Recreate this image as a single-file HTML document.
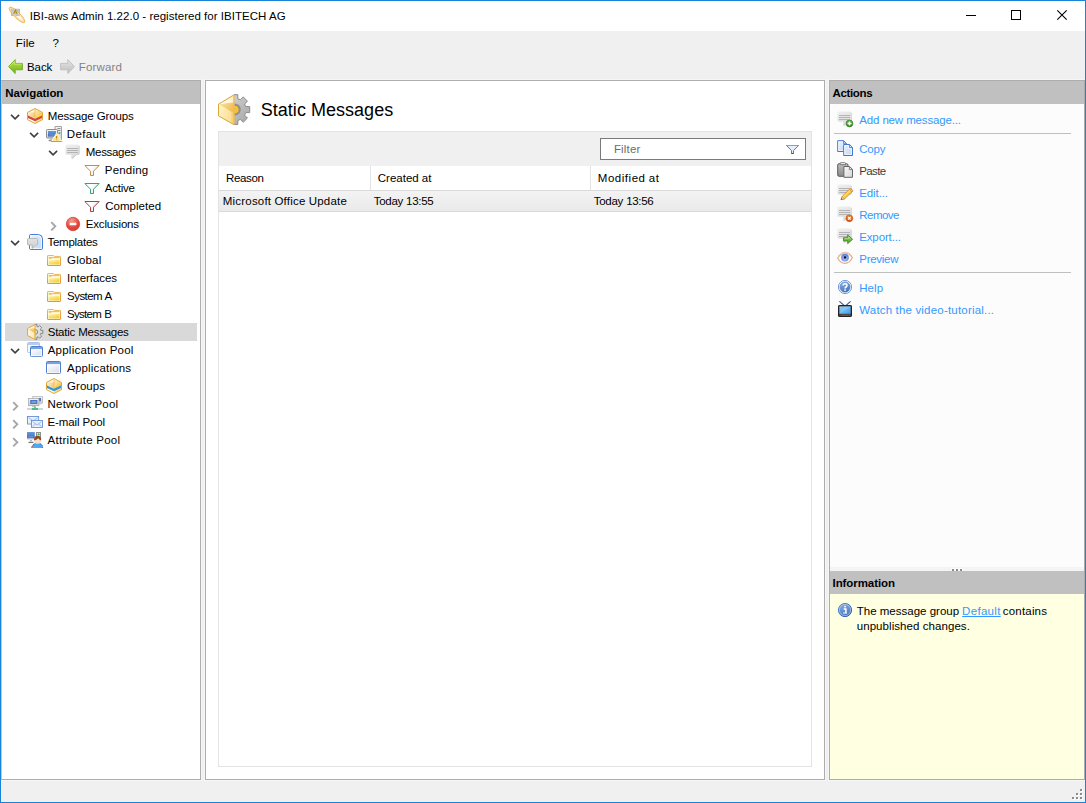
<!DOCTYPE html>
<html>
<head>
<meta charset="utf-8">
<title>IBI-aws Admin 1.22.0 - registered for IBITECH AG</title>
<style>
*{box-sizing:border-box;margin:0;padding:0}
html,body{width:1086px;height:803px;overflow:hidden;background:#f0f0f0}
body{font-family:"Liberation Sans",sans-serif;font-size:12px;color:#000;position:relative}
div,span,svg{position:absolute}
.tx{white-space:nowrap;font-size:12px}
.ic{overflow:visible}
#win{left:0;top:0;width:1086px;height:803px;border:1px solid #1883d7;background:transparent}
#title{left:1px;top:1px;width:1084px;height:30px;background:#fff}
.pn{border:1px solid #adadad;background:#fff;box-shadow:0 0 0 1px #f6f6f6}
.hd{background:#c0c0c0}
</style>
</head>
<body>

<svg style="left:0;top:0;width:0;height:0"><defs>
<linearGradient id="gFold" x1="0" y1="0" x2="0.8" y2="1"><stop offset="0" stop-color="#fff2b4"/><stop offset="1" stop-color="#f5cd2c"/></linearGradient>
<linearGradient id="gFoldS" x1="0" y1="0" x2="0" y2="1"><stop offset="0" stop-color="#ecb858"/><stop offset="1" stop-color="#e6933a"/></linearGradient>
<linearGradient id="gBoxL" x1="0" y1="0" x2="1" y2="1"><stop offset="0" stop-color="#fffbea"/><stop offset="1" stop-color="#eebf58"/></linearGradient>
<linearGradient id="gBoxR" x1="0" y1="0" x2="1" y2="1"><stop offset="0" stop-color="#fff0c4"/><stop offset="1" stop-color="#f6b62e"/></linearGradient>
<linearGradient id="gSide" x1="0" y1="0" x2="1" y2="0.6"><stop offset="0" stop-color="#fff8dc"/><stop offset="1" stop-color="#fbdc8c"/></linearGradient>
<linearGradient id="gInner" x1="0" y1="0" x2="1" y2="0.5"><stop offset="0" stop-color="#fae3a4"/><stop offset="1" stop-color="#f3bd52"/></linearGradient>
<linearGradient id="gTopF" x1="0" y1="1" x2="1" y2="0"><stop offset="0" stop-color="#ffffff"/><stop offset="1" stop-color="#fbe9b4"/></linearGradient>
<linearGradient id="gGreen" x1="0" y1="0" x2="0" y2="1"><stop offset="0" stop-color="#bfe455"/><stop offset="0.5" stop-color="#96cc2c"/><stop offset="1" stop-color="#6cae1c"/></linearGradient>
<linearGradient id="gGray" x1="0" y1="0" x2="0" y2="1"><stop offset="0" stop-color="#e6e6e6"/><stop offset="1" stop-color="#bcbcbc"/></linearGradient>
<linearGradient id="gBub" x1="0" y1="0" x2="0.3" y2="1"><stop offset="0" stop-color="#f0f0f0"/><stop offset="1" stop-color="#d9d9d9"/></linearGradient>
<linearGradient id="gBub2" x1="0" y1="0" x2="0" y2="1"><stop offset="0" stop-color="#e2e2e2"/><stop offset="1" stop-color="#d0d0d0"/></linearGradient>
<linearGradient id="gBlueDoc" x1="0" y1="0" x2="1" y2="1"><stop offset="0" stop-color="#eaf3fe"/><stop offset="1" stop-color="#bcd6f8"/></linearGradient>
<linearGradient id="gWin" x1="0.3" y1="0" x2="1" y2="1"><stop offset="0" stop-color="#ffffff"/><stop offset="1" stop-color="#d3dcec"/></linearGradient>
<linearGradient id="gScr" x1="0" y1="0" x2="0" y2="1"><stop offset="0" stop-color="#6a98dc"/><stop offset="1" stop-color="#3d6cbc"/></linearGradient>
<linearGradient id="gMon" x1="0" y1="0" x2="0" y2="1"><stop offset="0" stop-color="#f6f6f6"/><stop offset="1" stop-color="#cfcfcf"/></linearGradient>
<linearGradient id="gClip" x1="0" y1="0" x2="0" y2="1"><stop offset="0" stop-color="#bdbdbd"/><stop offset="1" stop-color="#8a8a8a"/></linearGradient>
<linearGradient id="gPap" x1="0" y1="0" x2="1" y2="1"><stop offset="0" stop-color="#fafafa"/><stop offset="1" stop-color="#d6d6d6"/></linearGradient>
<radialGradient id="gRed" cx="0.4" cy="0.25" r="0.85"><stop offset="0" stop-color="#f79a8c"/><stop offset="0.6" stop-color="#e2483e"/><stop offset="1" stop-color="#d4362e"/></radialGradient>
<linearGradient id="gInfo" x1="0" y1="0" x2="0.4" y2="1"><stop offset="0" stop-color="#8fb2e4"/><stop offset="1" stop-color="#4a78c0"/></linearGradient>
<linearGradient id="gInfoR" x1="0" y1="0" x2="1" y2="1"><stop offset="0" stop-color="#4f93e0"/><stop offset="1" stop-color="#36509c"/></linearGradient>
<linearGradient id="gGearL" x1="0" y1="0" x2="1" y2="1"><stop offset="0" stop-color="#f4f4f4"/><stop offset="1" stop-color="#d2d2d2"/></linearGradient>
<linearGradient id="gGear" x1="0" y1="0" x2="1" y2="1"><stop offset="0" stop-color="#dcdcdc"/><stop offset="1" stop-color="#a4a4a4"/></linearGradient>
<linearGradient id="gFun" x1="0" y1="0" x2="1" y2="0.4"><stop offset="0" stop-color="#ffffff"/><stop offset="0.5" stop-color="#ffffff"/><stop offset="1" stop-color="#e3e3e3"/></linearGradient>
<linearGradient id="gTv" x1="0" y1="0" x2="1" y2="1"><stop offset="0" stop-color="#93d0fa"/><stop offset="1" stop-color="#3f9eea"/></linearGradient>
<linearGradient id="gArr" x1="0" y1="0" x2="0" y2="1"><stop offset="0" stop-color="#9ad86a"/><stop offset="1" stop-color="#4f9f28"/></linearGradient>
<radialGradient id="gIris" cx="0.5" cy="0.65" r="0.6"><stop offset="0" stop-color="#a8c4f6"/><stop offset="1" stop-color="#5a80d8"/></radialGradient>
<linearGradient id="gPlus" x1="0" y1="0" x2="0" y2="1"><stop offset="0" stop-color="#62b844"/><stop offset="1" stop-color="#2f7f1c"/></linearGradient>
<linearGradient id="gOr" x1="0" y1="0" x2="0" y2="1"><stop offset="0" stop-color="#f4822e"/><stop offset="1" stop-color="#d4500c"/></linearGradient>
</defs></svg>
<div id="title"></div>
<svg style="left:946px;top:1px;width:139px;height:30px" viewBox="0 0 139 30">
<path d="M20 14.5h10" stroke="#000" stroke-width="1"/>
<rect x="65.5" y="9.5" width="9" height="9" fill="none" stroke="#000" stroke-width="1"/>
<path d="M111.3 9.3l9.4 9.4M120.7 9.3l-9.4 9.4" stroke="#000" stroke-width="1.1"/>
</svg>
<!-- navigation panel -->
<div class="pn" style="left:1px;top:80px;width:200px;height:700px;border-left-color:#c8c8c8"></div>
<div class="hd" style="left:2px;top:81px;width:198px;height:23px"></div>
<div style="left:5px;top:323px;width:192px;height:18px;background:#d9d9d9"></div>
<!-- center panel -->
<div class="pn" style="left:205px;top:80px;width:620px;height:700px"></div>
<div style="left:218px;top:131px;width:594px;height:636px;border:1px solid #e3e3e3;background:#fff"></div>
<div style="left:219px;top:132px;width:592px;height:34px;background:#f0f0f0"></div>
<div style="left:219px;top:190px;width:592px;height:1px;background:#d9d9d9"></div>
<div style="left:370px;top:166px;width:1px;height:24px;background:#e3e3e3"></div>
<div style="left:590px;top:166px;width:1px;height:24px;background:#e3e3e3"></div>
<div style="left:219px;top:191px;width:592px;height:20px;background:linear-gradient(#f3f3f3,#e9e9e9)"></div>
<div style="left:219px;top:211px;width:592px;height:1px;background:#d9d9d9"></div>
<div style="left:600px;top:138px;width:206px;height:22px;border:1px solid #7a7a7a;background:#fff"></div>
<!-- right panel -->
<div class="pn" style="left:829px;top:80px;width:256px;height:700px;background:#fcfcfc"></div>
<div class="hd" style="left:830px;top:81px;width:254px;height:23px"></div>
<div style="left:834px;top:133px;width:237px;height:1px;background:#bfbfbf"></div>
<div style="left:834px;top:272px;width:237px;height:1px;background:#bfbfbf"></div>
<div style="left:830px;top:567px;width:254px;height:4px;background:#f4f4f4"></div>
<div style="left:951px;top:568px;width:12px;height:3px;background:#fbfbfb"></div>
<div style="left:952px;top:569px;width:2px;height:2px;background:#8a8a8a;box-shadow:4px 0 #8a8a8a,8px 0 #8a8a8a"></div>
<div class="hd" style="left:830px;top:571px;width:254px;height:23px"></div>
<div style="left:830px;top:594px;width:254px;height:185px;background:#ffffe1"></div>
<!-- size grip -->
<svg style="left:1070px;top:787px;width:14px;height:14px" viewBox="0 0 14 14">
<g fill="#fff"><rect x="11" y="3" width="2" height="2"/><rect x="7" y="7" width="2" height="2"/><rect x="11" y="7" width="2" height="2"/><rect x="3" y="11" width="2" height="2"/><rect x="7" y="11" width="2" height="2"/><rect x="11" y="11" width="2" height="2"/></g>
<g fill="#8c8c8c"><rect x="10" y="2" width="2" height="2"/><rect x="6" y="6" width="2" height="2"/><rect x="10" y="6" width="2" height="2"/><rect x="2" y="10" width="2" height="2"/><rect x="6" y="10" width="2" height="2"/><rect x="10" y="10" width="2" height="2"/></g>
</svg>

<svg class="ic" style="left:27px;top:108px;width:16px;height:16px" viewBox="0 0 16 16"><path d="M8 0.5L15.5 4.4V11.6L8 15.5L0.5 11.6V4.4Z" fill="#fffbe6"/><path d="M8 15L15 11.4V9.4L8 13Z" fill="#fbdc98"/>
<path d="M1 4.7L8 1.1V11.2L1 7.8Z" fill="url(#gBoxL)"/>
<path d="M8 1.1L15 4.7V7.8L8 11.2Z" fill="url(#gBoxR)"/>
<path d="M2.5 4.3L7.6 1.7V4.2Z" fill="#fff" opacity="0.8"/>
<path d="M8 2V8.5" stroke="#e2b04a" stroke-width="0.7" opacity="0.8"/>
<path d="M8 9.4L15 6.1V7.8L8 11.1Z" fill="#f5e23c"/><path d="M1 7L8 10.3V11L1 7.8Z" fill="#fdf6c8"/>
<path d="M1 7.6L8 10.8L15 7.6V9.9L8 13.2L1 9.9Z" fill="#d9453c"/>
<path d="M8 0.5L15.5 4.4V11.6L8 15.5L0.5 11.6V4.4Z" fill="none" stroke="#dba634" stroke-width="1" stroke-linejoin="round"/></svg>
<svg class="ic" style="left:10.25px;top:113.5px;width:10px;height:7px" viewBox="0 0 10 7"><path d="M1.1 0.9 L5.1 4.9 L9.1 0.9" fill="none" stroke="#404040" stroke-width="1.6"/></svg>
<svg class="ic" style="left:46px;top:126px;width:16px;height:16px" viewBox="0 0 16 16"><path d="M9 0.5H15.5V14H9Z" fill="url(#gMon)" stroke="#a2a2a2"/>
<path d="M11.5 2.5H14.5M11.5 4.5H14.5" stroke="#8a8a8a"/><rect x="12.6" y="6.2" width="1.8" height="1.8" fill="#4bb04a"/>
<rect x="0.5" y="3.5" width="11" height="8.5" rx="0.8" fill="url(#gMon)" stroke="#8e8e8e"/>
<rect x="2" y="5" width="8" height="5.6" fill="url(#gScr)"/><path d="M3.5 9H8" stroke="#8db0e6" stroke-width="0.6"/>
<path d="M3.2 14.5H7" stroke="#8e8e8e" stroke-width="1.4" stroke-linecap="round"/><path d="M4.5 12.3H6.5V14H4.5Z" fill="#b5b5b5"/>
<path d="M10.6 7.4L15.4 15H5.8Z" fill="#fde88a" stroke="#fff8e0" stroke-width="1.2" stroke-linejoin="round"/>
<path d="M10.6 8L14.6 14.5H6.6Z" fill="#fde480"/>
<path d="M5.4 15.5H15.7" stroke="#e2952a" stroke-width="1.1" stroke-linecap="round"/>
<path d="M10.6 10V12.6M10.6 13.4V14.3" stroke="#c8821e" stroke-width="1.2"/></svg>
<svg class="ic" style="left:29.25px;top:131.5px;width:10px;height:7px" viewBox="0 0 10 7"><path d="M1.1 0.9 L5.1 4.9 L9.1 0.9" fill="none" stroke="#404040" stroke-width="1.6"/></svg>
<svg class="ic" style="left:65px;top:144px;width:16px;height:16px" viewBox="0 0 16 16"><path d="M2 0.5H13Q14.6 0.5 14.6 2.1V9.2Q14.6 10.8 13 10.8H12L7.3 15Q6.3 15 6.3 14V10.8H2Q0.4 10.8 0.4 9.2V2.1Q0.4 0.5 2 0.5Z" fill="url(#gBub)"/>
<path d="M14.2 2V9.3Q14.2 10.4 13.1 10.4H11.6L7.4 14.5" fill="none" stroke="#cbcbcb" stroke-width="0.8"/>
<path d="M2 4.5H13M2 6.5H13M2 8.5H13" stroke="#b4b4b4" stroke-width="1"/></svg>
<svg class="ic" style="left:48.25px;top:149.5px;width:10px;height:7px" viewBox="0 0 10 7"><path d="M1.1 0.9 L5.1 4.9 L9.1 0.9" fill="none" stroke="#404040" stroke-width="1.6"/></svg>
<svg class="ic" style="left:84px;top:162px;width:16px;height:16px" viewBox="0 0 16 16"><path d="M0.8 3.5H15.2L9.5 9.2V13.5H6.5V9.2Z" fill="url(#gFun)" stroke="#cc8a4b" stroke-width="1" stroke-linejoin="miter"/></svg>
<svg class="ic" style="left:84px;top:180px;width:16px;height:16px" viewBox="0 0 16 16"><path d="M0.8 3.5H15.2L9.5 9.2V13.5H6.5V9.2Z" fill="url(#gFun)" stroke="#2fa873" stroke-width="1" stroke-linejoin="miter"/></svg>
<svg class="ic" style="left:84px;top:198px;width:16px;height:16px" viewBox="0 0 16 16"><path d="M0.8 3.5H15.2L9.5 9.2V13.5H6.5V9.2Z" fill="url(#gFun)" stroke="#b23c48" stroke-width="1" stroke-linejoin="miter"/></svg>
<svg class="ic" style="left:65px;top:216px;width:16px;height:16px" viewBox="0 0 16 16"><circle cx="8" cy="8" r="6.7" fill="url(#gRed)" stroke="#d8443a" stroke-width="0.8"/><rect x="4.7" y="6.8" width="6.6" height="2.4" rx="0.3" fill="#fff"/></svg>
<svg class="ic" style="left:50.45px;top:220.55px;width:8px;height:11px" viewBox="0 0 8 11"><path d="M1.2 1.2 L5.3 5.3 L1.2 9.4" fill="none" stroke="#a6a6a6" stroke-width="1.9"/></svg>
<svg class="ic" style="left:27px;top:234px;width:16px;height:16px" viewBox="0 0 16 16"><path d="M3.8 0.5H11.5Q15.5 0.8 15.5 5V14.3Q15.5 15.5 14.3 15.5H3.8Q2.5 15.5 2.5 14.3V1.7Q2.5 0.5 3.8 0.5Z" fill="url(#gBlueDoc)" stroke="#3f7fd8"/>
<path d="M3.6 1.6H11.2Q14.3 2 14.4 5V14.4H3.6Z" fill="none" stroke="#fff" stroke-width="0.9" opacity="0.9"/>
<path d="M1.5 4.5H9.6Q10.6 4.5 10.6 5.5V10Q10.6 11 9.6 11H8.8L5.4 14.4V11H1.5Q0.5 11 0.5 10V5.5Q0.5 4.5 1.5 4.5Z" fill="url(#gBub2)" stroke="#b6b6b6" stroke-width="0.9"/></svg>
<svg class="ic" style="left:10.25px;top:239.5px;width:10px;height:7px" viewBox="0 0 10 7"><path d="M1.1 0.9 L5.1 4.9 L9.1 0.9" fill="none" stroke="#404040" stroke-width="1.6"/></svg>
<svg class="ic" style="left:46px;top:252px;width:16px;height:16px" viewBox="0 0 16 16"><path d="M1.5 4.1Q1.5 3.5 2.1 3.5H7.4L8.3 4.4H14Q14.5 4.4 14.5 5V13Q14.5 13.5 14 13.5H2Q1.5 13.5 1.5 13Z" fill="#fff8dc" stroke="url(#gFoldS)" stroke-width="1"/>
<path d="M2.6 8.6L13.4 8V12.5H2.6Z" fill="url(#gFold)"/>
<path d="M2.7 5H5.4L6.2 5.6L5.4 6.7H2.7Z" fill="#efc050"/><path d="M5.6 5.6H13.5" stroke="#ecbb50" stroke-width="1"/></svg>
<svg class="ic" style="left:46px;top:270px;width:16px;height:16px" viewBox="0 0 16 16"><path d="M1.5 4.1Q1.5 3.5 2.1 3.5H7.4L8.3 4.4H14Q14.5 4.4 14.5 5V13Q14.5 13.5 14 13.5H2Q1.5 13.5 1.5 13Z" fill="#fff8dc" stroke="url(#gFoldS)" stroke-width="1"/>
<path d="M2.6 8.6L13.4 8V12.5H2.6Z" fill="url(#gFold)"/>
<path d="M2.7 5H5.4L6.2 5.6L5.4 6.7H2.7Z" fill="#efc050"/><path d="M5.6 5.6H13.5" stroke="#ecbb50" stroke-width="1"/></svg>
<svg class="ic" style="left:46px;top:288px;width:16px;height:16px" viewBox="0 0 16 16"><path d="M1.5 4.1Q1.5 3.5 2.1 3.5H7.4L8.3 4.4H14Q14.5 4.4 14.5 5V13Q14.5 13.5 14 13.5H2Q1.5 13.5 1.5 13Z" fill="#fff8dc" stroke="url(#gFoldS)" stroke-width="1"/>
<path d="M2.6 8.6L13.4 8V12.5H2.6Z" fill="url(#gFold)"/>
<path d="M2.7 5H5.4L6.2 5.6L5.4 6.7H2.7Z" fill="#efc050"/><path d="M5.6 5.6H13.5" stroke="#ecbb50" stroke-width="1"/></svg>
<svg class="ic" style="left:46px;top:306px;width:16px;height:16px" viewBox="0 0 16 16"><path d="M1.5 4.1Q1.5 3.5 2.1 3.5H7.4L8.3 4.4H14Q14.5 4.4 14.5 5V13Q14.5 13.5 14 13.5H2Q1.5 13.5 1.5 13Z" fill="#fff8dc" stroke="url(#gFoldS)" stroke-width="1"/>
<path d="M2.6 8.6L13.4 8V12.5H2.6Z" fill="url(#gFold)"/>
<path d="M2.7 5H5.4L6.2 5.6L5.4 6.7H2.7Z" fill="#efc050"/><path d="M5.6 5.6H13.5" stroke="#ecbb50" stroke-width="1"/></svg>
<svg class="ic" style="left:27px;top:324px;width:16px;height:16px" viewBox="0 0 16 16"><circle cx="8.9" cy="8" r="2.8" fill="#f3dfae"/><clipPath id="gc16"><rect x="8.1" y="-2" width="40" height="40"/></clipPath><g clip-path="url(#gc16)"><path d="M6.91 2.50L6.89 0.45L9.91 0.45L9.89 2.50L11.16 3.03L12.60 1.57L14.73 3.70L13.27 5.14L13.80 6.41L15.85 6.39L15.85 9.41L13.80 9.39L13.27 10.66L14.73 12.10L12.60 14.23L11.16 12.77L9.89 13.30L9.91 15.35L6.89 15.35L6.91 13.30L5.64 12.77L4.20 14.23L2.07 12.10L3.53 10.66L3.00 9.39L0.95 9.41L0.95 6.39L3.00 6.41L3.53 5.14L2.07 3.70L4.20 1.57L5.64 3.03ZM6.10 7.90A2.3 2.3 0 1 0 10.70 7.90A2.3 2.3 0 1 0 6.10 7.90Z" fill="url(#gGearL)" fill-rule="evenodd" stroke="#7e7e7e" stroke-width="0.9" stroke-linejoin="round"/></g>
<path d="M8.1 0.5V15.5L0.5 11.5V4.5Z" fill="url(#gSide)"/><path d="M1 5L7 8.4V14.4L1 11.2Z" fill="#fffaf0" opacity="0.5"/>
<path d="M0.8 4.7L8.1 0.9V4.3Z" fill="url(#gTopF)"/>
<path d="M0.8 4.9L8.1 4.3V9.2Z" fill="url(#gInner)"/>
<path d="M8.1 0.5V15.5L0.5 11.5V4.5Z" fill="none" stroke="#dba634" stroke-width="0.9" stroke-linejoin="round"/></svg>
<svg class="ic" style="left:27px;top:342px;width:16px;height:16px" viewBox="0 0 16 16"><rect x="0.5" y="0.5" width="12" height="10" rx="1" fill="#f7f9fd" stroke="#a9c3ea"/><rect x="1" y="1" width="11" height="2" fill="#b6cdf0"/>
<rect x="3.5" y="4.5" width="12" height="10" rx="1" fill="url(#gWin)" stroke="#4f7ecf"/><rect x="4" y="5" width="11" height="2.2" fill="#7aa1e2"/>
<rect x="4.6" y="7.8" width="9.8" height="6" fill="none" stroke="#fff" stroke-width="0.8"/></svg>
<svg class="ic" style="left:10.25px;top:347.5px;width:10px;height:7px" viewBox="0 0 10 7"><path d="M1.1 0.9 L5.1 4.9 L9.1 0.9" fill="none" stroke="#404040" stroke-width="1.6"/></svg>
<svg class="ic" style="left:46px;top:360px;width:16px;height:16px" viewBox="0 0 16 16"><rect x="0.5" y="1.5" width="14" height="12" rx="1" fill="url(#gWin)" stroke="#4f7ecf"/><rect x="1" y="2" width="13" height="2.2" fill="#7aa1e2"/>
<rect x="1.6" y="4.8" width="11.8" height="8" fill="none" stroke="#fff" stroke-width="0.8"/></svg>
<svg class="ic" style="left:46px;top:378px;width:16px;height:16px" viewBox="0 0 16 16"><path d="M8 0.5L15.5 4.4V11.6L8 15.5L0.5 11.6V4.4Z" fill="#fffbe6"/><path d="M8 15L15 11.4V9.4L8 13Z" fill="#fbdc98"/>
<path d="M1 4.7L8 1.1V11.2L1 7.8Z" fill="url(#gBoxL)"/>
<path d="M8 1.1L15 4.7V7.8L8 11.2Z" fill="url(#gBoxR)"/>
<path d="M2.5 4.3L7.6 1.7V4.2Z" fill="#fff" opacity="0.8"/>
<path d="M8 2V8.5" stroke="#e2b04a" stroke-width="0.7" opacity="0.8"/>
<path d="M8 9.6L15 6.3V7.8L8 11.1Z" fill="#f8c83a"/><path d="M1 7L8 10.3V11L1 7.8Z" fill="#fdf3d0"/>
<path d="M1 7.6L8 10.8L15 7.6V9.9L8 13.2L1 9.9Z" fill="#2f97db"/>
<path d="M8 0.5L15.5 4.4V11.6L8 15.5L0.5 11.6V4.4Z" fill="none" stroke="#dba634" stroke-width="1" stroke-linejoin="round"/></svg>
<svg class="ic" style="left:27px;top:396px;width:16px;height:16px" viewBox="0 0 16 16"><rect x="5.8" y="0.5" width="9.7" height="6.6" fill="url(#gMon)" stroke="#b0b0b0" stroke-width="0.7"/><rect x="11.6" y="2" width="2.4" height="3.2" fill="#4a78c8"/>
<path d="M13 7.4V8.6" stroke="#b0b0b0"/>
<rect x="1.5" y="2.5" width="10.4" height="7.2" fill="url(#gMon)" stroke="#a2a2a2" stroke-width="0.7"/><rect x="3.2" y="4" width="7.2" height="3.9" fill="#4270c0"/>
<rect x="4.4" y="4.9" width="4.8" height="2" fill="#7a9ee0"/>
<path d="M5.2 10.6H8.4" stroke="#bdbdbd" stroke-width="1.2"/>
<path d="M0 13H16" stroke="#c9d3d5" stroke-width="1.8"/><path d="M5 13H11" stroke="#4fbb86" stroke-width="2"/><path d="M8 10.6V12.5" stroke="#4fbb86" stroke-width="1.5"/></svg>
<svg class="ic" style="left:12.45px;top:400.55px;width:8px;height:11px" viewBox="0 0 8 11"><path d="M1.2 1.2 L5.3 5.3 L1.2 9.4" fill="none" stroke="#a6a6a6" stroke-width="1.9"/></svg>
<svg class="ic" style="left:27px;top:414px;width:16px;height:16px" viewBox="0 0 16 16"><rect x="0.5" y="2.5" width="11.2" height="7.5" fill="#f4f8fe" stroke="#5f8ad0" stroke-width="0.85"/><rect x="1.4" y="3.4" width="9.4" height="5.7" fill="#e3edfb"/><path d="M1.6 3.6L6 7L10.6 3.6" fill="none" stroke="#8fb0e8" stroke-width="0.8"/>
<rect x="4.5" y="6.5" width="11" height="7" fill="#f8fbff" stroke="#5f8ad0" stroke-width="0.85"/><rect x="5.4" y="7.4" width="9.2" height="5.2" fill="#e3edfb"/><path d="M5.6 7.6L10 11L14.4 7.6M5.6 12.4L8.6 10M14.4 12.4L11.4 10" fill="none" stroke="#8fb0e8" stroke-width="0.8"/></svg>
<svg class="ic" style="left:12.45px;top:418.55px;width:8px;height:11px" viewBox="0 0 8 11"><path d="M1.2 1.2 L5.3 5.3 L1.2 9.4" fill="none" stroke="#a6a6a6" stroke-width="1.9"/></svg>
<svg class="ic" style="left:27px;top:432px;width:16px;height:16px" viewBox="0 0 16 16"><rect x="0" y="0" width="7.8" height="6.6" fill="url(#gScr)"/><path d="M1.5 5H6" stroke="#8fb2ea" stroke-width="0.6"/>
<rect x="0" y="6.6" width="7.8" height="1.3" fill="#e2e2e2"/><path d="M3 8H5V10H3Z" fill="#b9b9b9"/><path d="M1.5 10.5H6.5" stroke="#6a6a6a" stroke-width="1"/><path d="M1.8 9.6H6.2" stroke="#d8d8d8" stroke-width="1"/>
<rect x="9.5" y="0.5" width="4" height="6" fill="#e4e4e4" stroke="#8f8f8f"/><path d="M10.8 2.8L11.7 1.5L12.6 2.8Z" fill="#35a83c" stroke="#35a83c" stroke-width="0.6"/>
<path d="M4.6 16Q4.8 11.6 8.6 11.4H12.4Q15.8 11.6 16 16Z" fill="#4fa8f2"/>
<path d="M5.2 15.6Q5.4 12.2 8.4 11.6M12.6 11.6Q15.4 12.2 15.7 15.6" fill="none" stroke="#1d4fb4" stroke-width="0.9" stroke-dasharray="1.3 1"/>
<ellipse cx="10.6" cy="8.7" rx="3.3" ry="3" fill="#fbdcc6"/>
<path d="M7.1 8.6Q6.8 3.8 10.6 3.7Q14.5 3.8 14.1 8.6Q12 7.6 11.2 6.2Q9.6 7.8 7.1 8.6Z" fill="#8c4a1e"/>
<path d="M8.6 11.2Q10.6 12.4 12.6 11.2" fill="none" stroke="#e8b79c" stroke-width="0.8"/>
<rect x="4.2" y="14.2" width="1.5" height="1.8" fill="#f08c28"/></svg>
<svg class="ic" style="left:12.45px;top:436.55px;width:8px;height:11px" viewBox="0 0 8 11"><path d="M1.2 1.2 L5.3 5.3 L1.2 9.4" fill="none" stroke="#a6a6a6" stroke-width="1.9"/></svg>
<svg class="ic" style="left:837px;top:111px;width:16px;height:16px" viewBox="0 0 16 16"><path d="M2 0.5H13Q14.6 0.5 14.6 2.1V9.2Q14.6 10.8 13 10.8H12L7.3 15Q6.3 15 6.3 14V10.8H2Q0.4 10.8 0.4 9.2V2.1Q0.4 0.5 2 0.5Z" fill="url(#gBub)"/>
<path d="M14.2 2V9.3Q14.2 10.4 13.1 10.4H11.6L7.4 14.5" fill="none" stroke="#cbcbcb" stroke-width="0.8"/>
<path d="M2 4.5H13M2 6.5H13M2 8.5H13" stroke="#b4b4b4" stroke-width="1"/><circle cx="12.5" cy="12.5" r="3.4" fill="url(#gPlus)" stroke="#2c7a1a" stroke-width="0.6"/><path d="M12.5 10.5V14.5M10.5 12.5H14.5" stroke="#fff" stroke-width="1.5"/></svg>
<svg class="ic" style="left:837px;top:140px;width:16px;height:16px" viewBox="0 0 16 16"><path d="M0.7 0.7H6.6L9.5 3.6V11.5H0.7Z" fill="url(#gBlueDoc)" stroke="#3f77d4" stroke-linejoin="round"/><path d="M6.4 0.8V3.8H9.4" fill="none" stroke="#3f77d4" stroke-width="0.9"/>
<path d="M1.7 1.7H5.6V4.6H8.5V10.5H1.7Z" fill="none" stroke="#fff" stroke-width="0.8" opacity="0.8"/>
<path d="M6.7 4.5H12.6L15.5 7.4V15.5H6.7Z" fill="url(#gBlueDoc)" stroke="#3f77d4" stroke-linejoin="round"/><path d="M12.4 4.6V7.6H15.4" fill="none" stroke="#3f77d4" stroke-width="0.9"/>
<path d="M7.7 5.5H11.6V8.4H14.5V14.5H7.7Z" fill="none" stroke="#fff" stroke-width="0.8" opacity="0.8"/></svg>
<svg class="ic" style="left:837px;top:162px;width:16px;height:16px" viewBox="0 0 16 16"><rect x="0.7" y="1.7" width="10.3" height="12.6" rx="1.4" fill="url(#gClip)" stroke="#5c5c5c"/>
<path d="M3.2 2.6V1.4Q3.2 0.6 4 0.6H7.7Q8.5 0.6 8.5 1.4V2.6Z" fill="#f2f2f2" stroke="#6a6a6a" stroke-width="0.8"/>
<path d="M6.9 4.5H12.6L15.5 7.4V15.3H6.9Z" fill="url(#gPap)" stroke="#666" stroke-linejoin="round"/><path d="M12.4 4.7V7.6H15.3" fill="none" stroke="#777" stroke-width="0.9"/></svg>
<svg class="ic" style="left:837px;top:184px;width:16px;height:16px" viewBox="0 0 16 16"><path d="M2 0.5H13Q14.6 0.5 14.6 2.1V9.2Q14.6 10.8 13 10.8H12L7.3 15Q6.3 15 6.3 14V10.8H2Q0.4 10.8 0.4 9.2V2.1Q0.4 0.5 2 0.5Z" fill="url(#gBub)"/>
<path d="M14.2 2V9.3Q14.2 10.4 13.1 10.4H11.6L7.4 14.5" fill="none" stroke="#cbcbcb" stroke-width="0.8"/>
<path d="M2 4.5H13M2 6.5H13M2 8.5H13" stroke="#b4b4b4" stroke-width="1"/><path d="M4 15.6L5 12.6L12.9 4.9Q13.9 4.4 15 5.5Q16 6.6 15.5 7.5L7.4 15Z" fill="#f7cb45" stroke="#d68e26" stroke-width="0.8" stroke-linejoin="round"/>
<path d="M6 13.2L13.6 5.8" stroke="#fde68e" stroke-width="1"/>
<path d="M12.4 5.4L15 8L15.5 7.5Q16 6.6 15 5.5Q13.9 4.4 12.9 4.9Z" fill="#f1b0a4" stroke="#d68e26" stroke-width="0.6"/>
<path d="M4 15.6L5 12.6L7.4 15Z" fill="#f3dcb6" stroke="#b5803a" stroke-width="0.6"/><path d="M4 15.6L4.5 14.2L5.5 15.2Z" fill="#4a3520"/></svg>
<svg class="ic" style="left:837px;top:206px;width:16px;height:16px" viewBox="0 0 16 16"><path d="M2 0.5H13Q14.6 0.5 14.6 2.1V9.2Q14.6 10.8 13 10.8H12L7.3 15Q6.3 15 6.3 14V10.8H2Q0.4 10.8 0.4 9.2V2.1Q0.4 0.5 2 0.5Z" fill="url(#gBub)"/>
<path d="M14.2 2V9.3Q14.2 10.4 13.1 10.4H11.6L7.4 14.5" fill="none" stroke="#cbcbcb" stroke-width="0.8"/>
<path d="M2 4.5H13M2 6.5H13M2 8.5H13" stroke="#b4b4b4" stroke-width="1"/><circle cx="12.4" cy="12.3" r="3.4" fill="url(#gOr)" stroke="#c44c0a" stroke-width="0.6"/><path d="M11.1 11L13.7 13.6M13.7 11L11.1 13.6" stroke="#fff" stroke-width="1.3"/></svg>
<svg class="ic" style="left:837px;top:228px;width:16px;height:16px" viewBox="0 0 16 16"><path d="M2 0.5H13Q14.6 0.5 14.6 2.1V9.2Q14.6 10.8 13 10.8H12L7.3 15Q6.3 15 6.3 14V10.8H2Q0.4 10.8 0.4 9.2V2.1Q0.4 0.5 2 0.5Z" fill="url(#gBub)"/>
<path d="M14.2 2V9.3Q14.2 10.4 13.1 10.4H11.6L7.4 14.5" fill="none" stroke="#cbcbcb" stroke-width="0.8"/>
<path d="M2 4.5H13M2 6.5H13M2 8.5H13" stroke="#b4b4b4" stroke-width="1"/><path d="M6.5 9.7H10.7V7L15.6 11.3L10.7 15.6V12.9H6.5Z" fill="url(#gArr)" stroke="#3b8a1c" stroke-width="0.9" stroke-linejoin="round"/><path d="M7.3 10.6H11.5V9L13.8 11" fill="none" stroke="#bfe89a" stroke-width="0.7"/></svg>
<svg class="ic" style="left:837px;top:250px;width:16px;height:16px" viewBox="0 0 16 16"><path d="M0.6 8Q4 3 8.3 3Q12.6 3 15.4 7.8Q12.4 13.3 8 13.3Q3.5 13.3 0.6 8Z" fill="#fff" stroke="#e4ae88" stroke-width="1.2"/>
<path d="M1 6.4Q4.4 2 8.4 2.2Q12.2 2.4 14.8 5.8" fill="none" stroke="#ecc2a2" stroke-width="1"/>
<circle cx="8" cy="7.6" r="3.9" fill="url(#gIris)"/><rect x="7" y="6.4" width="2.1" height="2.1" fill="#0a0a14"/></svg>
<svg class="ic" style="left:837px;top:279px;width:16px;height:16px" viewBox="0 0 16 16"><circle cx="8" cy="8" r="6.6" fill="#fff" stroke="#5d8ed6" stroke-width="0.9"/><circle cx="8" cy="8" r="5.2" fill="url(#gInfo)" stroke="#5583cc" stroke-width="0.5"/>
<path d="M6.1 6.6Q6.1 4.7 8.1 4.7Q10 4.7 10 6.4Q10 7.4 9 8Q8.1 8.5 8.1 9.4" fill="none" stroke="#fff" stroke-width="1.5"/><rect x="7.3" y="10.3" width="1.6" height="1.5" fill="#fff"/></svg>
<svg class="ic" style="left:837px;top:301px;width:16px;height:16px" viewBox="0 0 16 16"><path d="M2.4 0.4L7.4 4.6M13.6 0.4L8.8 4.6" stroke="#4a586e" stroke-width="1.2"/><rect x="1.5" y="4.5" width="13" height="11" rx="0.6" fill="#3c3c3c" stroke="#242424"/>
<rect x="2.4" y="5.4" width="11.2" height="7.4" fill="url(#gTv)"/><path d="M2.4 12.8L8 5.4H13.6" fill="#bfe4fc" opacity="0.25"/>
<rect x="3.6" y="13.6" width="1.2" height="1.2" fill="#ee2020"/><path d="M5.6 14.2H13.4" stroke="#8e8e8e" stroke-width="1" stroke-dasharray="1 1"/></svg>
<svg class="ic" style="left:837px;top:602px;width:16px;height:16px" viewBox="0 0 16 16"><circle cx="8" cy="8" r="6.6" fill="url(#gInfo)" stroke="url(#gInfoR)" stroke-width="1"/><circle cx="8" cy="8" r="5.6" fill="none" stroke="#b4cbec" stroke-width="0.7"/>
<rect x="7.2" y="3.9" width="1.7" height="1.5" fill="#fff"/><path d="M6.6 6.9H8.9V10.8" stroke="#fff" stroke-width="1.5" fill="none"/><path d="M6.2 11H10" stroke="#fff" stroke-width="1.1"/></svg>
<svg class="ic" style="left:8px;top:59px;width:16px;height:16px" viewBox="0 0 16 16"><path d="M0.6 7.6L7.2 0.6V4.4H14.4V10.8H7.2V14.6Z" fill="url(#gGreen)" stroke="#71ad24" stroke-width="0.9" stroke-linejoin="round"/><path d="M1.8 7.4L6.4 2.6V5.2H13.6" fill="none" stroke="#d8f088" stroke-width="0.8" opacity="0.8"/></svg>
<svg class="ic" style="left:60px;top:59px;width:16px;height:16px" viewBox="0 0 16 16"><path d="M14.4 7.6L7.8 0.6V4.4H0.6V10.8H7.8V14.6Z" fill="url(#gGray)" stroke="#bdbdbd" stroke-width="0.9" stroke-linejoin="round"/></svg>
<svg class="ic" style="left:8px;top:7px;width:17px;height:17px" viewBox="0 0 17 17"><ellipse cx="9" cy="7.9" rx="9.8" ry="2.1" transform="rotate(44.5 9 7.9)" fill="#fffaf0" stroke="#fbe4b8" stroke-width="2"/>
<ellipse cx="9" cy="7.9" rx="10.5" ry="2.8" transform="rotate(44.5 9 7.9)" fill="none" stroke="#eeae42" stroke-width="0.9"/>
<g opacity="0.72"><rect x="3" y="1.8" width="8.9" height="7" fill="#7f9dbd"/><rect x="3.7" y="2.5" width="7.5" height="5.6" fill="#9db7d4"/></g>
<ellipse cx="9" cy="7.9" rx="9.8" ry="2.1" transform="rotate(44.5 9 7.9)" fill="none" stroke="#fdebc8" stroke-width="1.8" opacity="0.5"/>
<ellipse cx="9" cy="7.9" rx="10.5" ry="2.8" transform="rotate(44.5 9 7.9)" fill="none" stroke="#eeae42" stroke-width="0.9" opacity="0.55"/>
<path d="M5.8 6.8L7.4 3.3L9 6.8" fill="none" stroke="#b58c22" stroke-width="1.3"/></svg>
<svg class="ic" style="left:218px;top:94px;width:32px;height:32px" viewBox="0 0 32 32"><circle cx="17.3" cy="15.9" r="5" fill="#fbc02e"/><clipPath id="gc32"><rect x="15.9" y="-2" width="40" height="40"/></clipPath><g clip-path="url(#gc32)"><path d="M13.79 4.71L13.78 0.70L19.82 0.70L19.81 4.71L22.37 5.77L25.20 2.93L29.47 7.20L26.63 10.03L27.69 12.59L31.70 12.58L31.70 18.62L27.69 18.61L26.63 21.17L29.47 24.00L25.20 28.27L22.37 25.43L19.81 26.49L19.82 30.50L13.78 30.50L13.79 26.49L11.23 25.43L8.40 28.27L4.13 24.00L6.97 21.17L5.91 18.61L1.90 18.62L1.90 12.58L5.91 12.59L6.97 10.03L4.13 7.20L8.40 2.93L11.23 5.77ZM12.40 15.60A4.4 4.4 0 1 0 21.20 15.60A4.4 4.4 0 1 0 12.40 15.60Z" fill="url(#gGear)" fill-rule="evenodd" stroke="#8c8c8c" stroke-width="1" stroke-linejoin="round"/><circle cx="16.8" cy="15.6" r="5.2" fill="none" stroke="#8f8f8f" stroke-width="1.6"/></g>
<path d="M16 0.8V30.7L0.5 21.9V10.2Z" fill="url(#gSide)"/>
<path d="M1 10.2L16 1.4V8.6Z" fill="url(#gTopF)"/>
<path d="M1 10.3L16 8.6V19.2Z" fill="url(#gInner)"/>
<path d="M16 19.2V30.4L13.4 29V17.8Z" fill="#f7c453" opacity="0.5"/>
<path d="M16 0.8V30.7L0.5 21.9V10.2Z" fill="none" stroke="#dba634" stroke-width="1" stroke-linejoin="round"/>
<path d="M16 1V30.5" stroke="#ecc880" stroke-width="1"/></svg>
<svg class="ic" style="left:786px;top:145px;width:13px;height:9px" viewBox="0 0 13 9"><path d="M0.5 0.5H12.5L7.5 5.6V8.5H5.5V5.6Z" fill="#e6f0fc" stroke="#3f7fdc" stroke-width="1"/><path d="M0.5 0.5H12.5" stroke="#6fa5ee" stroke-width="1"/><path d="M5.5 8.5H7.5" stroke="#1f4f9e"/></svg>
<span class="tx" style="left:29.82px;top:7.52px;line-height:17px;font-size:11.5px;letter-spacing:0.036px;word-spacing:-0.036px;">IBI-aws Admin 1.22.0 - registered for IBITECH AG</span>
<span class="tx" style="left:15.82px;top:34.52px;line-height:17px;font-size:11.5px;letter-spacing:0.140px;">File</span>
<span class="tx" style="left:52.62px;top:34.52px;line-height:17px;font-size:11.5px;">?</span>
<span class="tx" style="left:26.93px;top:58.52px;line-height:17px;font-size:11.5px;letter-spacing:-0.043px;">Back</span>
<span class="tx" style="left:78.72px;top:58.52px;line-height:17px;font-size:11.5px;letter-spacing:0.177px;color:#838383;">Forward</span>
<span class="tx" style="left:5.22px;top:84.52px;line-height:17px;font-size:11.5px;letter-spacing:-0.072px;font-weight:bold;">Navigation</span>
<span class="tx" style="left:47.72px;top:107.52px;line-height:17px;font-size:11.5px;letter-spacing:-0.119px;word-spacing:0.119px;">Message Groups</span>
<span class="tx" style="left:66.72px;top:125.52px;line-height:17px;font-size:11.5px;letter-spacing:0.369px;">Default</span>
<span class="tx" style="left:85.83px;top:143.52px;line-height:17px;font-size:11.5px;letter-spacing:-0.325px;">Messages</span>
<span class="tx" style="left:104.83px;top:161.52px;line-height:17px;font-size:11.5px;letter-spacing:0.189px;">Pending</span>
<span class="tx" style="left:104.83px;top:179.52px;line-height:17px;font-size:11.5px;letter-spacing:-0.236px;">Active</span>
<span class="tx" style="left:105.22px;top:197.52px;line-height:17px;font-size:11.5px;letter-spacing:0.028px;">Completed</span>
<span class="tx" style="left:85.83px;top:215.52px;line-height:17px;font-size:11.5px;letter-spacing:-0.191px;">Exclusions</span>
<span class="tx" style="left:47.42px;top:233.52px;line-height:17px;font-size:11.5px;letter-spacing:-0.246px;">Templates</span>
<span class="tx" style="left:67.12px;top:251.52px;line-height:17px;font-size:11.5px;letter-spacing:0.180px;">Global</span>
<span class="tx" style="left:67.12px;top:269.52px;line-height:17px;font-size:11.5px;letter-spacing:-0.072px;">Interfaces</span>
<span class="tx" style="left:67.12px;top:287.52px;line-height:17px;font-size:11.5px;letter-spacing:-0.571px;word-spacing:0.571px;">System A</span>
<span class="tx" style="left:67.12px;top:305.52px;line-height:17px;font-size:11.5px;letter-spacing:-0.728px;word-spacing:0.728px;">System B</span>
<span class="tx" style="left:47.72px;top:323.52px;line-height:17px;font-size:11.5px;letter-spacing:-0.248px;word-spacing:0.248px;">Static Messages</span>
<span class="tx" style="left:47.72px;top:341.52px;line-height:17px;font-size:11.5px;letter-spacing:0.226px;word-spacing:-0.226px;">Application Pool</span>
<span class="tx" style="left:67.12px;top:359.52px;line-height:17px;font-size:11.5px;letter-spacing:0.176px;">Applications</span>
<span class="tx" style="left:67.12px;top:377.52px;line-height:17px;font-size:11.5px;letter-spacing:0.026px;">Groups</span>
<span class="tx" style="left:47.52px;top:395.52px;line-height:17px;font-size:11.5px;letter-spacing:0.216px;word-spacing:-0.216px;">Network Pool</span>
<span class="tx" style="left:47.52px;top:413.52px;line-height:17px;font-size:11.5px;letter-spacing:-0.129px;word-spacing:0.129px;">E-mail Pool</span>
<span class="tx" style="left:47.52px;top:431.52px;line-height:17px;font-size:11.5px;letter-spacing:0.292px;word-spacing:-0.292px;">Attribute Pool</span>
<span class="tx" style="left:260.70px;top:97.26px;line-height:27px;font-size:18px;letter-spacing:0.034px;word-spacing:-0.034px;">Static Messages</span>
<span class="tx" style="left:613.92px;top:140.52px;line-height:17px;font-size:11.5px;letter-spacing:0.177px;color:#6d6d6d;">Filter</span>
<span class="tx" style="left:226.03px;top:169.52px;line-height:17px;font-size:11.5px;letter-spacing:-0.338px;">Reason</span>
<span class="tx" style="left:377.82px;top:169.52px;line-height:17px;font-size:11.5px;letter-spacing:-0.007px;word-spacing:0.007px;">Created at</span>
<span class="tx" style="left:597.82px;top:169.52px;line-height:17px;font-size:11.5px;letter-spacing:0.532px;word-spacing:-0.532px;">Modified at</span>
<span class="tx" style="left:222.73px;top:192.52px;line-height:17px;font-size:11.5px;letter-spacing:0.210px;word-spacing:-0.210px;">Microsoft Office Update</span>
<span class="tx" style="left:373.82px;top:192.52px;line-height:17px;font-size:11.5px;letter-spacing:-0.314px;word-spacing:0.314px;">Today 13:55</span>
<span class="tx" style="left:593.72px;top:192.52px;line-height:17px;font-size:11.5px;letter-spacing:-0.291px;word-spacing:0.291px;">Today 13:56</span>
<span class="tx" style="left:832.62px;top:84.52px;line-height:17px;font-size:11.5px;letter-spacing:-0.370px;font-weight:bold;">Actions</span>
<span class="tx" style="left:859.22px;top:111.52px;line-height:17px;font-size:11.5px;letter-spacing:-0.164px;word-spacing:0.164px;color:#3399ff;">Add new message...</span>
<span class="tx" style="left:859.22px;top:140.52px;line-height:17px;font-size:11.5px;letter-spacing:-0.170px;color:#3399ff;">Copy</span>
<span class="tx" style="left:859.22px;top:162.52px;line-height:17px;font-size:11.5px;letter-spacing:-0.618px;color:#3c3c3c;">Paste</span>
<span class="tx" style="left:859.22px;top:184.52px;line-height:17px;font-size:11.5px;letter-spacing:-0.093px;color:#3399ff;">Edit...</span>
<span class="tx" style="left:859.22px;top:206.52px;line-height:17px;font-size:11.5px;letter-spacing:-0.516px;color:#3399ff;">Remove</span>
<span class="tx" style="left:859.22px;top:228.52px;line-height:17px;font-size:11.5px;letter-spacing:-0.135px;color:#3399ff;">Export...</span>
<span class="tx" style="left:859.22px;top:250.52px;line-height:17px;font-size:11.5px;letter-spacing:-0.259px;color:#3399ff;">Preview</span>
<span class="tx" style="left:859.22px;top:279.52px;line-height:17px;font-size:11.5px;letter-spacing:0.065px;color:#3399ff;">Help</span>
<span class="tx" style="left:859.22px;top:301.52px;line-height:17px;font-size:11.5px;letter-spacing:0.203px;word-spacing:-0.203px;color:#3399ff;">Watch the video-tutorial...</span>
<span class="tx" style="left:832.52px;top:574.52px;line-height:17px;font-size:11.5px;letter-spacing:-0.070px;font-weight:bold;">Information</span>
<span class="tx" style="left:856.72px;top:602.52px;line-height:17px;font-size:11.5px;letter-spacing:0.011px;word-spacing:-0.011px;">The message group</span>
<span class="tx" style="left:962.12px;top:602.52px;line-height:17px;font-size:11.5px;letter-spacing:0.302px;color:#3399ff;text-decoration:underline;">Default</span>
<span class="tx" style="left:1002.82px;top:602.52px;line-height:17px;font-size:11.5px;letter-spacing:0.187px;">contains</span>
<span class="tx" style="left:856.72px;top:617.52px;line-height:17px;font-size:11.5px;letter-spacing:0.069px;word-spacing:-0.069px;">unpublished changes.</span>
<div id="win"></div>
</body>
</html>
